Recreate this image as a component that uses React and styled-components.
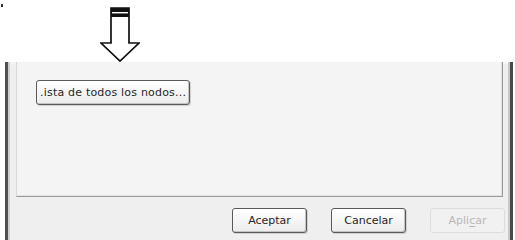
import React from 'react'
import styled, { createGlobalStyle } from 'styled-components'

const GlobalStyle = createGlobalStyle`
  html, body {
    margin: 0;
    padding: 0;
    background: #ffffff;
  }
  body {
    width: 515px;
    height: 240px;
    overflow: hidden;
    font-family: "DejaVu Sans", "Liberation Sans", sans-serif;
  }
`

const Page = styled.div`
  width: 515px;
  height: 240px;
  display: flex;
  flex-direction: column;
  background: #ffffff;
`

const TopArea = styled.div`
  height: 62px;
  display: flex;
  align-items: flex-start;
  position: relative;
`

const Speck = styled.span`
  position: absolute;
  left: 1px;
  top: 4px;
  width: 2px;
  height: 3px;
  background: #333;
`

const ArrowIcon = styled.svg`
  margin-left: 100px;
  margin-top: 7px;
  display: block;
`

const Dialog = styled.div`
  flex: 1;
  margin-left: 5px;
  width: 508px;
  box-sizing: border-box;
  background: linear-gradient(#f7f7f7, #efefef 4px);
  border-left: 3px solid #505050;
  border-right: 3px solid #4a4a4a;
  box-shadow: inset 2px 0 0 #cfcfcf, inset -2px 0 0 #c8c8c8;
  display: flex;
  flex-direction: column;
`

const Panel = styled.div`
  margin: 0 7px 0 8px;
  height: 135px;
  box-sizing: border-box;
  background: #f4f4f4;
  border-left: 1px solid #d8d8d8;
  border-right: 1px solid #9a9a9a;
  border-bottom: 1px solid #9a9a9a;
  box-shadow: inset -1px -1px 0 #e2e2e2;
  padding: 18px 0 0 19px;
`

const ButtonRow = styled.div`
  display: flex;
  justify-content: flex-end;
  gap: 24px;
  padding: 11px 5px 0 0;
`

const Button = styled.button`
  width: ${p => p.$w || 75}px;
  height: 25px;
  box-sizing: border-box;
  padding: 0 3px;
  font-family: "DejaVu Sans", "Liberation Sans", sans-serif;
  font-size: 11px;
  letter-spacing: ${p => p.$spacing || 0}px;
  color: ${p => (p.disabled ? '#b8b8b8' : '#262626')};
  background: ${p => (p.disabled ? '#f1f1f1' : 'linear-gradient(#ffffff, #ececec)')};
  border: 1px solid ${p => (p.disabled ? '#dcdcdc' : '#5a5a5a')};
  border-radius: 3px;
  box-shadow: ${p => (p.disabled ? 'none' : 'inset -1px -1px 0 #c4c4c4, 1px 1px 0 #d0d0d0')};
  text-align: ${p => (p.$left ? 'left' : 'center')};
  white-space: nowrap;
  overflow: hidden;
`

const AccessKey = styled.span`
  text-decoration: underline;
  text-underline-offset: 2px;
`

export default function App() {
  return (
    <Page>
      <GlobalStyle />
      <TopArea>
        <Speck />
        <ArrowIcon width="40" height="56" viewBox="0 0 40 56">
          <path
            d="M11 1 H29 V36 H39 L20 54 L1 36 H11 Z"
            fill="#ffffff"
            stroke="#111"
            strokeWidth="1.7"
            strokeLinejoin="miter"
          />
          <rect x="11" y="1" width="18" height="9" fill="#111" />
          <rect x="12" y="5" width="16" height="1.4" fill="#ffffff" />
        </ArrowIcon>
      </TopArea>
      <Dialog>
        <Panel>
          <Button $w={154} $left $spacing={0.2}>.ista de todos los nodos...</Button>
        </Panel>
        <ButtonRow>
          <Button>Aceptar</Button>
          <Button>Cancelar</Button>
          <Button disabled>Apli<AccessKey>c</AccessKey>ar</Button>
        </ButtonRow>
      </Dialog>
    </Page>
  )
}
